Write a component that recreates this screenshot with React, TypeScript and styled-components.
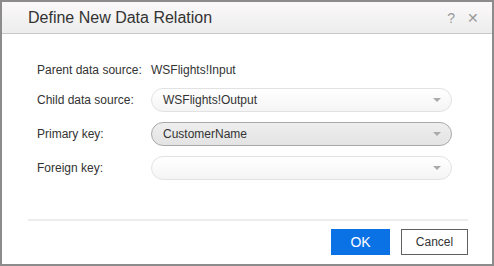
import { Fragment } from 'react';
import styled, { createGlobalStyle } from 'styled-components';

const GlobalStyle = createGlobalStyle`
  html, body {
    margin: 0;
    padding: 0;
    background: #ffffff;
  }
  body {
    font-family: "Liberation Sans", Arial, sans-serif;
  }
`;

const Dialog = styled.div`
  box-sizing: border-box;
  width: 494px;
  height: 266px;
  border: 2px solid #8c8c8c;
  background: #ffffff;
  display: flex;
  flex-direction: column;
`;

const TitleBar = styled.div`
  height: 31px;
  display: flex;
  align-items: center;
  justify-content: space-between;
  padding: 0 13px 0 26px;
  background: linear-gradient(#fbf8fa, #ededed);
  border-bottom: 1px solid #c9c9c9;
`;

const Title = styled.div`
  font-size: 16px;
  color: #333333;
`;

const TitleTools = styled.div`
  display: flex;
  gap: 12px;
  color: #9a9a9a;
  font-size: 14px;
`;

const Body = styled.div`
  flex: 1;
  display: flex;
  flex-direction: column;
  padding: 28px 24px 0 26px;
`;

const Form = styled.div`
  display: grid;
  grid-template-columns: 114px 301px;
  grid-template-rows: 16px;
  grid-auto-rows: 24px;
  row-gap: 10px;
  align-items: center;
  padding-left: 9px;
`;

const Label = styled.div`
  font-size: 12px;
  color: #333333;
`;

const Value = styled.div`
  font-size: 12px;
  color: #333333;
`;

const Select = styled.div<{ $active?: boolean }>`
  box-sizing: border-box;
  height: 24px;
  border-radius: 12px;
  border: 1px solid ${(p) => (p.$active ? '#a9a9a9' : '#e2e2e2')};
  background: ${(p) =>
    p.$active
      ? 'linear-gradient(#eeeeee, #e3e3e3)'
      : 'linear-gradient(#ffffff, #f4f4f4)'};
  display: flex;
  align-items: center;
  justify-content: space-between;
  padding: 0 10px 0 11px;
  font-size: 12px;
  color: #333333;
`;

const Arrow = styled.span`
  width: 0;
  height: 0;
  border-left: 4px solid transparent;
  border-right: 4px solid transparent;
  border-top: 4px solid #aaaaaa;
`;

const Footer = styled.div`
  margin-top: auto;
  border-top: 2px solid #ececec;
  display: flex;
  justify-content: flex-end;
  gap: 11px;
  padding: 8px 0 9px 0;
`;

const Button = styled.button<{ $primary?: boolean }>`
  box-sizing: border-box;
  height: 26px;
  min-width: ${(p) => (p.$primary ? '59px' : '67px')};
  border: 1px solid ${(p) => (p.$primary ? '#0b72e6' : '#5f5f5f')};
  background: ${(p) => (p.$primary ? '#0b72e6' : '#ffffff')};
  color: ${(p) => (p.$primary ? '#ffffff' : '#333333')};
  font-family: "Liberation Sans", Arial, sans-serif;
  font-size: ${(p) => (p.$primary ? '14px' : '12px')};
  padding: 0;
  cursor: pointer;
`;

const rows = [
  { label: 'Child data source:', value: 'WSFlights!Output', active: false },
  { label: 'Primary key:', value: 'CustomerName', active: true },
  { label: 'Foreign key:', value: '', active: false },
];

const App = () => {
  return (
    <>
      <GlobalStyle />
      <Dialog>
        <TitleBar>
          <Title>Define New Data Relation</Title>
          <TitleTools>
            <span>?</span>
            <span>✕</span>
          </TitleTools>
        </TitleBar>
        <Body>
          <Form>
            <Label>Parent data source:</Label>
            <Value>WSFlights!Input</Value>
            {rows.map((r) => (
              <Fragment key={r.label}>
                <Label>{r.label}</Label>
                <Select $active={r.active}>
                  <span>{r.value}</span>
                  <Arrow />
                </Select>
              </Fragment>
            ))}
          </Form>
          <Footer>
            <Button $primary>OK</Button>
            <Button>Cancel</Button>
          </Footer>
        </Body>
      </Dialog>
    </>
  );
};

export default App;
